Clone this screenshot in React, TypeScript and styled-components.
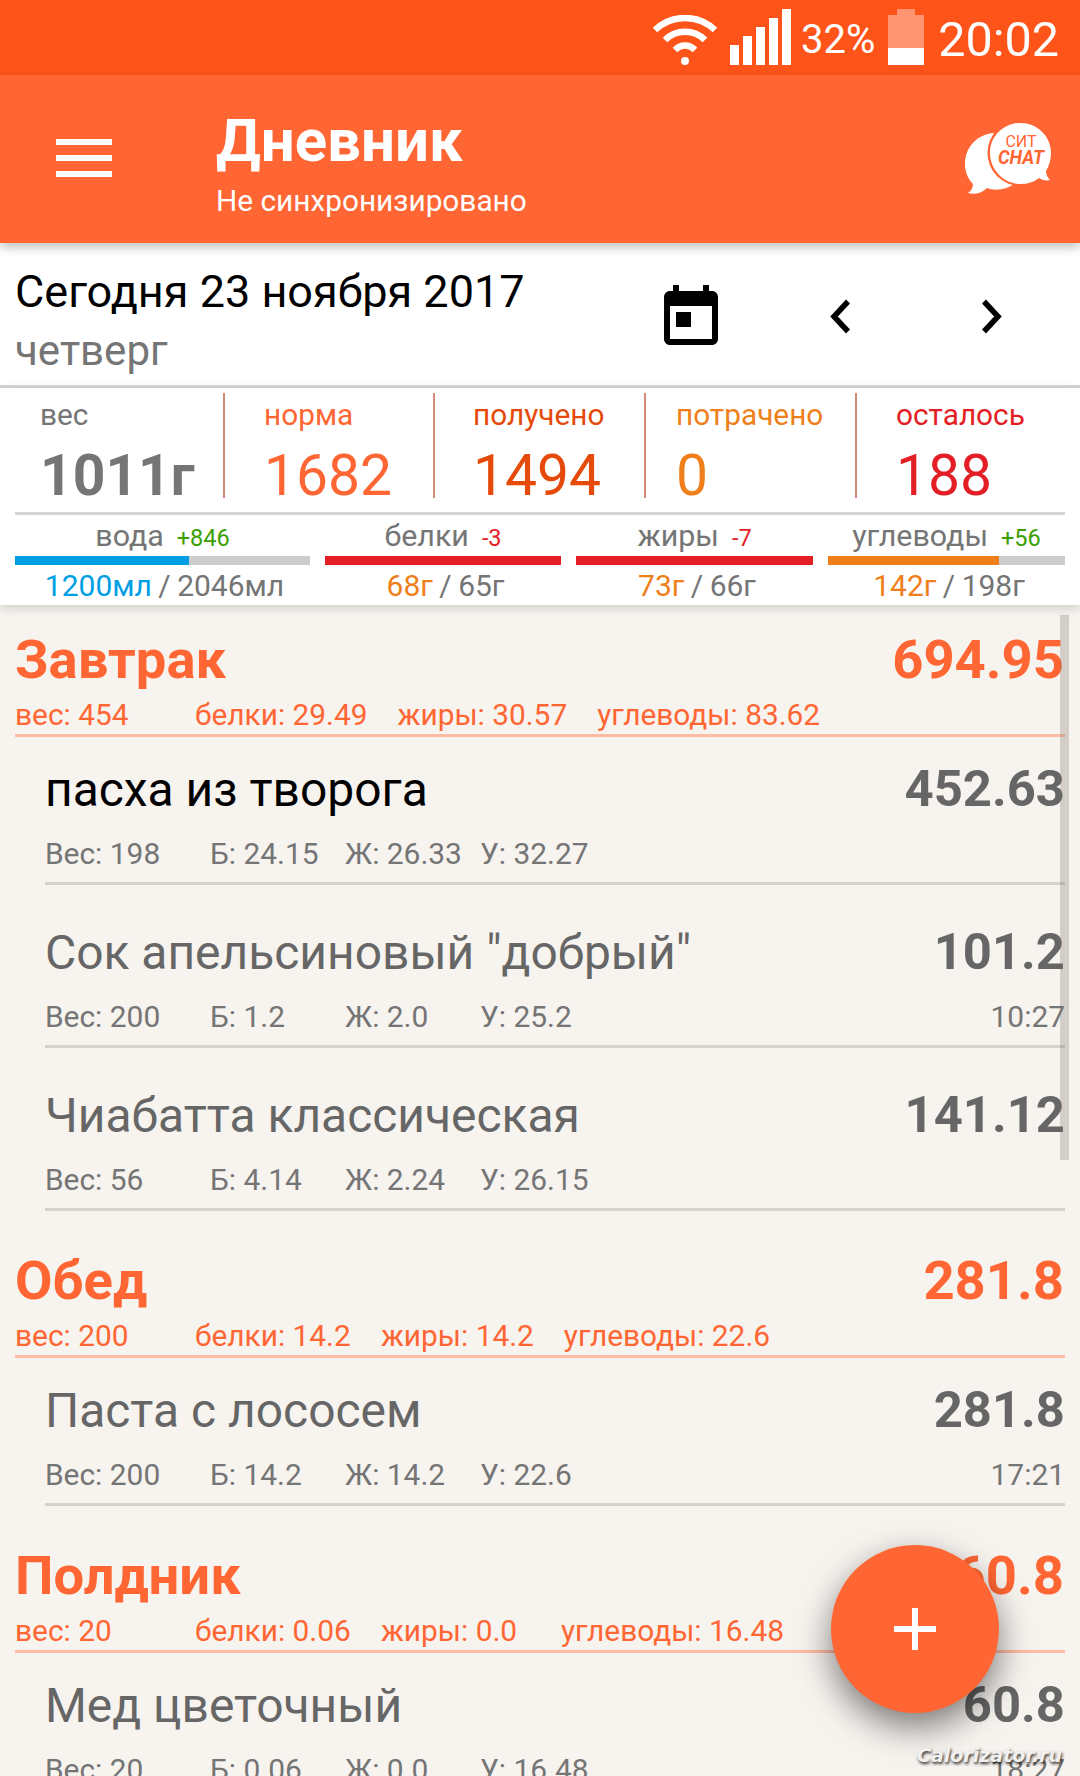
import React from 'react';
import styled, { createGlobalStyle } from 'styled-components';

const GlobalStyle = createGlobalStyle`
  html, body { margin: 0; padding: 0; background: #f7f3ef; }
  body { font-family: Roboto, "Liberation Sans", sans-serif; }
  * { box-sizing: border-box; }
`;

const ORANGE = '#ff6633';

const Screen = styled.div`
  position: relative;
  width: 1080px;
  height: 1776px;
  overflow: hidden;
  background: #f7f3ef;
`;

const StatusBar = styled.div`
  height: 75px;
  background: #ff5419;
  display: flex;
  justify-content: flex-end;
  align-items: flex-start;
  padding-right: 21px;
  color: #fff;
`;

const WifiIcon = styled.svg`
  width: 66px;
  height: 50px;
  margin-top: 15px;
  margin-right: 12px;
`;

const SignalBars = styled.div`
  display: flex;
  align-items: flex-end;
  gap: 4px;
  height: 56px;
  margin-top: 9px;
`;

const SignalBar = styled.span<{ $h: number }>`
  width: 9px;
  height: ${({ $h }) => $h}px;
  background: #fff;
`;

const BatteryText = styled.span`
  font-size: 40px;
  line-height: 79px;
  margin-left: 10px;
`;

const Battery = styled.div`
  position: relative;
  width: 36px;
  height: 50px;
  margin: 15px 14px 0 13px;
  background: linear-gradient(to bottom, #ff9470 0 66%, #fff 66% 100%);

  &::before {
    content: '';
    position: absolute;
    left: 9px;
    top: -6px;
    width: 18px;
    height: 6px;
    background: #ff9470;
  }
`;

const Clock = styled.span`
  font-size: 48.5px;
  line-height: 79px;
`;

const AppBar = styled.header`
  position: relative;
  z-index: 2;
  height: 168px;
  background: ${ORANGE};
  box-shadow: 0 4px 10px rgba(0, 0, 0, 0.25);
  display: flex;
  align-items: center;
  padding: 0 26px 0 56px;
  color: #fff;
`;

const Burger = styled.div`
  width: 56px;
  display: flex;
  flex-direction: column;
  gap: 10px;
  margin-right: 104px;
  margin-top: -2px;

  span {
    height: 6px;
    background: #fff;
  }
`;

const AppTitles = styled.div`
  flex: 1;
  margin-top: 10px;
`;

const AppTitle = styled.div`
  font-size: 60px;
  font-weight: 700;
  line-height: 72px;
`;

const AppSubtitle = styled.div`
  font-size: 29.8px;
  line-height: 44px;
  margin-top: 2px;
`;

const ChatLogo = styled.svg`
  width: 92px;
  height: 74px;
`;

const DateRow = styled.section`
  height: 145px;
  background: #fff;
  border-bottom: 3px solid #d5d5d5;
  display: flex;
  padding-left: 15px;
`;

const DateTexts = styled.div`
  width: 640px;
  padding-top: 19px;
`;

const DateTitle = styled.div`
  font-size: 45px;
  line-height: 60px;
  color: #000;
`;

const DateSub = styled.div`
  font-size: 42px;
  line-height: 50px;
  color: #757575;
  margin-top: 4px;
`;

const DateIcon = styled.svg<{ $left: number; $top: number; $w: number; $h: number }>`
  margin-left: ${({ $left }) => $left}px;
  margin-top: ${({ $top }) => $top}px;
  width: ${({ $w }) => $w}px;
  height: ${({ $h }) => $h}px;
`;

const Summary = styled.section`
  position: relative;
  z-index: 1;
  height: 217px;
  background: #fff;
  box-shadow: 0 3px 10px rgba(0, 0, 0, 0.16);
  padding: 5px 15px 0;
`;

const StatsGrid = styled.div`
  display: grid;
  grid-template-columns: 208px 210px 211px 211px 1fr;
  height: 105px;
  margin-bottom: 14px;
`;

const Stat = styled.div<{ $color: string; $pad: number; $first?: boolean }>`
  color: ${({ $color }) => $color};
  padding-left: ${({ $pad }) => $pad}px;
  border-left: ${({ $first }) => ($first ? 'none' : '2px solid #d28b76')};
  white-space: nowrap;
`;

const StatLabel = styled.div`
  font-size: 29.8px;
  line-height: 36px;
  margin-top: 4px;
`;

const StatValue = styled.div<{ $bold?: boolean }>`
  font-size: 57px;
  line-height: 42px;
  margin-top: 22px;
  font-weight: ${({ $bold }) => ($bold ? 700 : 400)};
`;

const MacroGrid = styled.div`
  display: grid;
  grid-template-columns: 295px 236px 237px 237px;
  gap: 0 15px;
  border-top: 3px solid #d5d5d5;
`;

const Macro = styled.div`
  text-align: center;
`;

const MacroHead = styled.div`
  font-size: 30.4px;
  line-height: 36px;
  color: #757575;
  padding-top: 3px;
  height: 41px;
`;

const MacroDelta = styled.span<{ $color: string }>`
  font-size: 23.5px;
  color: ${({ $color }) => $color};
  margin-left: 13px;
`;

const Track = styled.div`
  height: 9px;
  background: #cccccc;
`;

const Fill = styled.div<{ $color: string }>`
  height: 100%;
  background: ${({ $color }) => $color};
`;

const MacroAmount = styled.div<{ $shift: number }>`
  font-size: 30px;
  line-height: 36px;
  margin-top: 3px;
  padding-left: ${({ $shift }) => $shift}px;
  word-spacing: -1px;
  color: #757575;
`;

const Amount = styled.span<{ $color: string }>`
  color: ${({ $color }) => $color};
`;

const List = styled.main`
  padding: 0 15px;
`;

const MealHead = styled.div<{ $first?: boolean }>`
  margin-top: ${({ $first }) => ($first ? 16 : 31)}px;
  padding-top: 9px;
  border-bottom: 3px solid #ffbba4;
  height: 116px;
  color: ${ORANGE};
`;

const MealTop = styled.div`
  display: flex;
  justify-content: space-between;
  font-size: 54.4px;
  font-weight: 700;
  line-height: 60px;
  padding-right: 1px;
`;

const MealMacros = styled.div`
  display: flex;
  font-size: 29.85px;
  line-height: 36px;
  margin-top: 7px;
  white-space: nowrap;
`;

const MealMacro = styled.span<{ $min: number }>`
  min-width: ${({ $min }) => $min}px;
  margin-right: 30px;
`;

const Food = styled.div<{ $first?: boolean }>`
  margin-left: 30px;
  margin-top: ${({ $first }) => ($first ? 0 : 15)}px;
  padding: 23px 0 10px;
  border-bottom: 3px solid #d5d2ce;
  color: #666;
`;

const FoodTop = styled.div`
  display: flex;
  justify-content: space-between;
  line-height: 60px;
`;

const FoodName = styled.span<{ $dark?: boolean }>`
  font-size: 47.95px;
  color: ${({ $dark }) => ($dark ? '#000' : '#666')};
`;

const FoodKcal = styled.span`
  font-size: 50.8px;
  font-weight: 700;
  line-height: 57px;
`;

const FoodMeta = styled.div`
  display: grid;
  grid-template-columns: 165px 135px 135px 1fr auto;
  margin-top: 16px;
  font-size: 29.9px;
  line-height: 36px;
  color: #757575;
`;

const ScrollThumb = styled.div`
  position: absolute;
  left: 1060px;
  top: 615px;
  width: 9px;
  height: 545px;
  background: rgba(120, 110, 100, 0.28);
`;

const Fab = styled.div`
  position: absolute;
  left: 831px;
  top: 1545px;
  width: 168px;
  height: 168px;
  border-radius: 50%;
  background: ${ORANGE};
  box-shadow: 0 14px 34px rgba(0, 0, 0, 0.5);

  &::before,
  &::after {
    content: '';
    position: absolute;
    background: #fff;
  }
  &::before {
    left: 63px;
    top: 81px;
    width: 42px;
    height: 6px;
  }
  &::after {
    left: 81px;
    top: 63px;
    width: 6px;
    height: 42px;
  }
`;

const Watermark = styled.div`
  position: absolute;
  left: 917px;
  top: 1744px;
  font-family: "DejaVu Sans", sans-serif;
  font-size: 19px;
  font-weight: 700;
  font-style: italic;
  color: #f2f0ee;
  text-shadow: 1px 2px 3px rgba(0, 0, 0, 0.8);
`;

const meals = [
  {
    name: 'Завтрак',
    kcal: '694.95',
    macros: [['вес: 454', 150], ['белки: 29.49', 156], ['жиры: 30.57', 150], ['углеводы: 83.62', 100]],
    foods: [
      { name: 'пасха из творога', kcal: '452.63', w: '198', p: '24.15', f: '26.33', c: '32.27', dark: true },
      { name: 'Сок апельсиновый "добрый"', kcal: '101.2', w: '200', p: '1.2', f: '2.0', c: '25.2', time: '10:27' },
      { name: 'Чиабатта классическая', kcal: '141.12', w: '56', p: '4.14', f: '2.24', c: '26.15' },
    ],
  },
  {
    name: 'Обед',
    kcal: '281.8',
    macros: [['вес: 200', 150], ['белки: 14.2', 156], ['жиры: 14.2', 150], ['углеводы: 22.6', 100]],
    foods: [{ name: 'Паста с лососем', kcal: '281.8', w: '200', p: '14.2', f: '14.2', c: '22.6', time: '17:21' }],
  },
  {
    name: 'Полдник',
    kcal: '60.8',
    macros: [['вес: 20', 150], ['белки: 0.06', 156], ['жиры: 0.0', 150], ['углеводы: 16.48', 100]],
    foods: [{ name: 'Мед цветочный', kcal: '60.8', w: '20', p: '0.06', f: '0.0', c: '16.48', time: '18:27' }],
  },
];

const stats = [
  { label: 'вес', value: '1011г', color: '#757575', pad: 25, bold: true },
  { label: 'норма', value: '1682', color: ORANGE, pad: 39 },
  { label: 'получено', value: '1494', color: '#e64a0a', pad: 38 },
  { label: 'потрачено', value: '0', color: '#ef7f1a', pad: 30 },
  { label: 'осталось', value: '188', color: '#e31e24', pad: 39 },
];

const macros = [
  { name: 'вода', delta: '+846', deltaColor: '#3aa000', fill: 59, barColor: '#009fe3', got: '1200мл', total: '2046мл', gotColor: '#009fe3', shift: 4 },
  { name: 'белки', delta: '-3', deltaColor: '#e31e24', fill: 100, barColor: '#e31e24', got: '68г', total: '65г', gotColor: '#ef7f1a', shift: 5 },
  { name: 'жиры', delta: '-7', deltaColor: '#e31e24', fill: 100, barColor: '#e31e24', got: '73г', total: '66г', gotColor: '#ef7f1a', shift: 5 },
  { name: 'углеводы', delta: '+56', deltaColor: '#3aa000', fill: 72, barColor: '#ef7f1a', got: '142г', total: '198г', gotColor: '#ef7f1a', shift: 5 },
];

export default function App() {
  return (
    <Screen>
      <GlobalStyle />
      <StatusBar>
        <WifiIcon viewBox="0 0 66 50">
          <g fill="none" stroke="#fff" strokeWidth="6.5">
            <path d="M3 15C20 -1 46 -1 63 15" />
            <path d="M13 25C24 14 42 14 53 25" />
            <path d="M23 35C29 29 37 29 43 35" />
          </g>
          <circle cx="33" cy="46" r="4" fill="#fff" />
        </WifiIcon>
        <SignalBars>
          {[20, 29, 38, 47, 56].map((h) => (
            <SignalBar key={h} $h={h} />
          ))}
        </SignalBars>
        <BatteryText>32%</BatteryText>
        <Battery />
        <Clock>20:02</Clock>
      </StatusBar>

      <AppBar>
        <Burger>
          <span />
          <span />
          <span />
        </Burger>
        <AppTitles>
          <AppTitle>Дневник</AppTitle>
          <AppSubtitle>Не синхронизировано</AppSubtitle>
        </AppTitles>
        <ChatLogo viewBox="0 0 92 74">
          <path
            fill="#fff"
            d="M31 11C14 13 3 26 3 42c0 8 3 15 8 20 0 4-2 7-5 9 7 2 14 0 19-5 8 3 19 2 27-4L50 25 31 11z"
          />
          <circle cx="58.5" cy="31" r="33" fill={ORANGE} />
          <path
            fill="#fff"
            d="M58.5 1C75 1 89 14 89 31c0 7-2 13-5 18 0 4 2 7 4 9-4 1-8 0-11-2-5 4-11 6-18.5 6C42 62 28 48 28 31S42 1 58.5 1z"
          />
          <text x="59" y="25" textAnchor="middle" fontFamily="Roboto" fontSize="17" textLength="31" lengthAdjust="spacingAndGlyphs" fill={ORANGE}>
            СИТ
          </text>
          <text x="59" y="42" textAnchor="middle" fontFamily="Roboto" fontSize="20" fontWeight="700" fontStyle="italic" textLength="46" lengthAdjust="spacingAndGlyphs" fill={ORANGE}>
            CHAT
          </text>
        </ChatLogo>
      </AppBar>

      <DateRow>
        <DateTexts>
          <DateTitle>Сегодня 23 ноября 2017</DateTitle>
          <DateSub>четверг</DateSub>
        </DateTexts>
        <DateIcon $left={0} $top={39} $w={72} $h={72} viewBox="0 0 24 24">
          <path d="M7 10h5v5H7zM16 1v2H8V1H6v2H5C3.89 3 3.01 3.9 3.01 5L3 19c0 1.1.89 2 2 2h14c1.1 0 2-.9 2-2V5c0-1.1-.9-2-2-2h-1V1h-2zm3 18H5V8h14v11z" />
        </DateIcon>
        <DateIcon $left={103} $top={56} $w={21} $h={35} viewBox="0 0 21 35">
          <path d="M18 2.5L4 17.5l14 15" fill="none" stroke="#000" strokeWidth="5.5" />
        </DateIcon>
        <DateIcon $left={130} $top={56} $w={21} $h={35} viewBox="0 0 21 35">
          <path d="M3 2.5l14 15-14 15" fill="none" stroke="#000" strokeWidth="5.5" />
        </DateIcon>
      </DateRow>

      <Summary>
        <StatsGrid>
          {stats.map((s, i) => (
            <Stat key={s.label} $color={s.color} $pad={s.pad} $first={i === 0}>
              <StatLabel>{s.label}</StatLabel>
              <StatValue $bold={s.bold}>{s.value}</StatValue>
            </Stat>
          ))}
        </StatsGrid>
        <MacroGrid>
          {macros.map((m) => (
            <Macro key={m.name}>
              <MacroHead>
                {m.name}
                <MacroDelta $color={m.deltaColor}>{m.delta}</MacroDelta>
              </MacroHead>
              <Track>
                <Fill $color={m.barColor} style={{ width: `${m.fill}%` }} />
              </Track>
              <MacroAmount $shift={m.shift}>
                <Amount $color={m.gotColor}>{m.got}</Amount> / {m.total}
              </MacroAmount>
            </Macro>
          ))}
        </MacroGrid>
      </Summary>

      <List>
        {meals.map((meal, i) => (
          <React.Fragment key={meal.name}>
            <MealHead $first={i === 0}>
              <MealTop>
                <span>{meal.name}</span>
                <span>{meal.kcal}</span>
              </MealTop>
              <MealMacros>
                {meal.macros.map(([text, min]) => (
                  <MealMacro key={text} $min={min as number}>
                    {text}
                  </MealMacro>
                ))}
              </MealMacros>
            </MealHead>
            {meal.foods.map((food, j) => (
              <Food key={food.name} $first={j === 0}>
                <FoodTop>
                  <FoodName $dark={food.dark}>{food.name}</FoodName>
                  <FoodKcal>{food.kcal}</FoodKcal>
                </FoodTop>
                <FoodMeta>
                  <span>Вес: {food.w}</span>
                  <span>Б: {food.p}</span>
                  <span>Ж: {food.f}</span>
                  <span>У: {food.c}</span>
                  <span>{food.time}</span>
                </FoodMeta>
              </Food>
            ))}
          </React.Fragment>
        ))}
      </List>

      <ScrollThumb />
      <Fab />
      <Watermark>Calorizator.ru</Watermark>
    </Screen>
  );
}
